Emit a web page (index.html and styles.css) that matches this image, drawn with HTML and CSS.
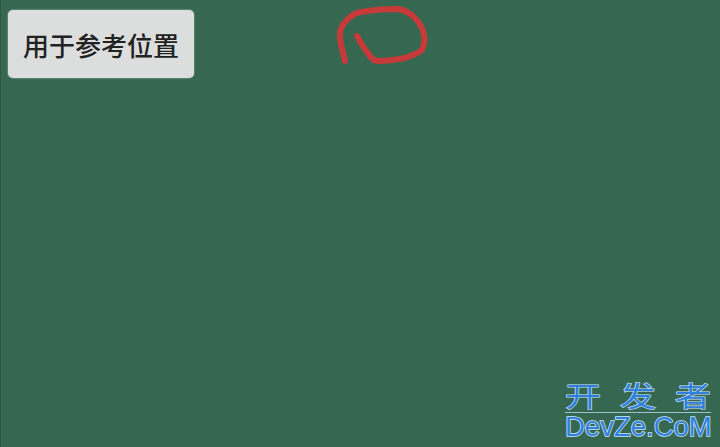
FILE: index.html
```html
<!DOCTYPE html>
<html lang="zh-CN">
  <head>
    <meta charset="UTF-8" />
    <title>用于参考位置</title>
    <link rel="stylesheet" href="styles.css">
  </head>
  <body>
    <button class="ref-button">用于参考位置</button>

    <!-- hand drawn circle -->
    <svg class="scribble" width="720" height="447" viewBox="0 0 720 447">
      <path d="M345 61 C343 52 340 44 340 35 C340 29 342 25 346 21 C350 16 355 13 361 12 C372 10 385 9 398 9 C405 10 410 13 414 17 C419 22 423 28 424 35 C425 41 424 46 422 50 C417 54 411 56 405 58 C395 60 386 61 378 61 C374 61 372 59 370 56 C365 50 361 44 357 36"/>
    </svg>

    <!-- watermark -->
    <div class="watermark">
      <div class="watermark-cn">
        <span>开</span>
        <span>发</span>
        <span>者</span>
      </div>
      <div class="watermark-en">DevZe.CoM</div>
    </div>
  </body>
</html>
```

FILE: styles.css
```css
body {
  margin: 0;
  width: 720px;
  height: 447px;
  overflow: hidden;
  position: relative;
  background-color: #356751;
  border-left: 1px solid #2b5844;
  box-sizing: border-box;
  padding: 10px 0 0 7px;
  font-family: "Liberation Sans", "Noto Sans CJK SC", sans-serif;
}

.ref-button {
  display: block;
  width: 186px;
  height: 68px;
  padding: 0;
  background-color: #dcdedd;
  border: none;
  border-radius: 5px;
  box-shadow: 0 0 2px #a9cdbd;
  color: #222;
  font-family: "Noto Sans CJK SC", sans-serif;
  font-size: 26px;
  font-weight: 500;
}

.scribble {
  position: absolute;
  left: -1px;
  top: 0;
}

.scribble path {
  fill: none;
  stroke: #c63b39;
  stroke-width: 6;
  stroke-linecap: round;
  stroke-linejoin: round;
}

.watermark {
  position: absolute;
  left: 564px;
  top: 382px;
  width: 146px;
  color: #2f80dc;
  paint-order: stroke fill;
  -webkit-text-stroke: 1.5px #cfe6f5;
}

.watermark-cn {
  display: flex;
  justify-content: space-between;
  height: 30px;
  border-bottom: 1px solid #bcdcf0;
  font-family: "Noto Sans CJK SC", sans-serif;
  font-size: 36px;
  line-height: 15px;
  transform: scaleY(0.78);
  transform-origin: bottom;
}

.watermark-en {
  font-size: 27.5px;
  line-height: 26px;
  margin-top: 1px;
  white-space: nowrap;
}
```
